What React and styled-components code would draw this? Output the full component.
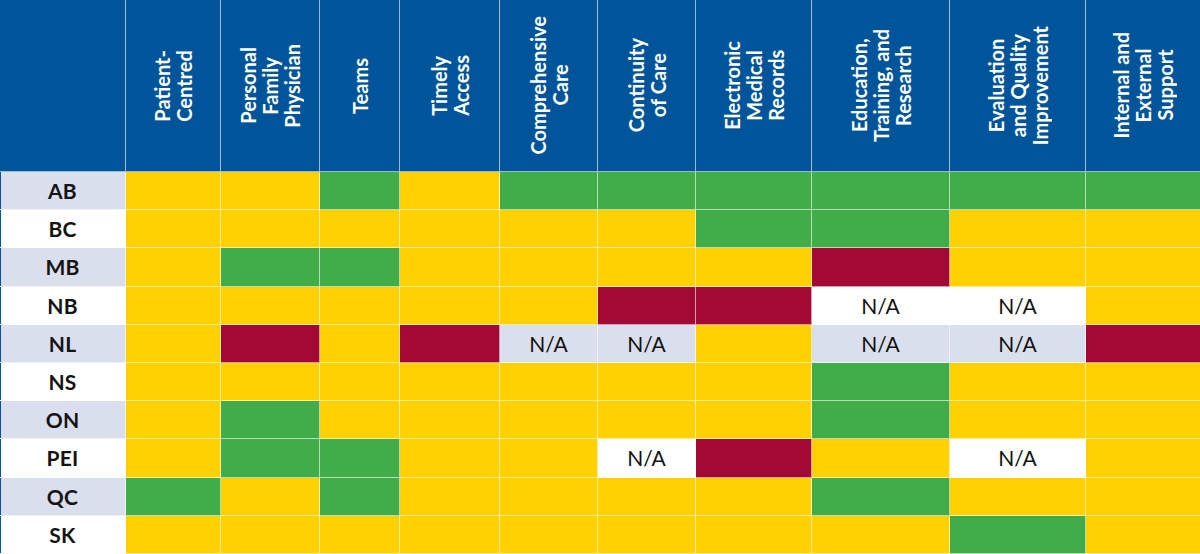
import React from "react";
import styled, { createGlobalStyle } from "styled-components";

const Global = createGlobalStyle`
  html, body { margin: 0; padding: 0; background: #ffffff; }
  body { font-family: Lato, "Open Sans", sans-serif; }
`;

const COLORS = {
  blue: "#00559a",
  Y: "#ffd100",
  G: "#41ad49",
  R: "#a20a35",
  lav: "#d9dfec",
  white: "#ffffff",
};

const columns = [
  { w: 95, label: ["Patient-", "Centred"] },
  { w: 99, label: ["Personal", "Family", "Physician"] },
  { w: 80, label: ["Teams"] },
  { w: 100, label: ["Timely", "Access"] },
  { w: 98, label: ["Comprehensive", "Care"] },
  { w: 98, label: ["Continuity", "of Care"] },
  { w: 116, label: ["Electronic", "Medical", "Records"] },
  { w: 138, label: ["Education,", "Training, and", "Research"] },
  { w: 136, label: ["Evaluation", "and Quality", "Improvement"] },
  { w: 114, label: ["Internal and", "External", "Support"] },
];

const rows = [
  ["AB", "YYGYGGGGGG"],
  ["BC", "YYYYYYGGYY"],
  ["MB", "YGGYYYYRYY"],
  ["NB", "YYYYYRRNNY"],
  ["NL", "YRYRNNYNNR"],
  ["NS", "YYYYYYYGYY"],
  ["ON", "YGYYYYYGYY"],
  ["PEI", "YGGYYNRYNY"],
  ["QC", "GYGYYYYGYY"],
  ["SK", "YYYYYYYYGY"],
];

const Table = styled.div`
  display: grid;
  grid-template-columns: 126px ${columns.map((c) => `${c.w}px`).join(" ")};
  grid-template-rows: 172px repeat(10, 1fr);
  width: 1200px;
  height: 554px;
  overflow: hidden;
`;

const Cell = styled.div`
  box-sizing: border-box;
  border-right: ${(p) => (p.$last ? "none" : "1px solid rgba(255,255,255,0.6)")};
  border-bottom: 1px solid rgba(255, 255, 255, 0.6);
  display: flex;
  align-items: center;
  justify-content: center;
  min-width: 0;
  min-height: 0;
`;

const Corner = styled(Cell)`
  background: ${COLORS.blue};
`;

const HeadCell = styled(Cell)`
  background: ${COLORS.blue};
`;

const HeadText = styled.div`
  writing-mode: vertical-rl;
  transform: rotate(180deg);
  text-align: center;
  color: #ffffff;
  font-family: Lato, "Open Sans", sans-serif;
  font-weight: 700;
  font-size: 20px;
  line-height: 22px;
  white-space: nowrap;
`;

const LabelCell = styled(Cell)`
  background: ${(p) => (p.$alt ? COLORS.lav : COLORS.white)};
  box-shadow: inset 1px 0 0 ${COLORS.blue};
  color: #141414;
  font-family: Lato, "Open Sans", sans-serif;
  font-weight: 700;
  font-size: 21px;
  letter-spacing: 0.2px;
`;

const DataCell = styled(Cell)`
  background: ${(p) =>
    p.$status === "N" ? (p.$alt ? COLORS.lav : COLORS.white) : COLORS[p.$status]};
  color: #111111;
  font-family: Lato, "Open Sans", sans-serif;
  font-weight: 400;
  font-size: 21px;
`;

export default function App() {
  return (
    <>
      <Global />
      <Table>
        <Corner />
        {columns.map((c, i) => (
          <HeadCell key={i} $last={i === columns.length - 1}>
            <HeadText>
              {c.label.map((l, j) => (
                <div key={j}>{l}</div>
              ))}
            </HeadText>
          </HeadCell>
        ))}
        {rows.map(([name, data], r) => (
          <React.Fragment key={name}>
            <LabelCell $alt={r % 2 === 0}>{name}</LabelCell>
            {data.split("").map((s, i) => (
              <DataCell
                key={i}
                $status={s}
                $alt={r % 2 === 0}
                $last={i === data.length - 1}
              >
                {s === "N" ? "N/A" : null}
              </DataCell>
            ))}
          </React.Fragment>
        ))}
      </Table>
    </>
  );
}
